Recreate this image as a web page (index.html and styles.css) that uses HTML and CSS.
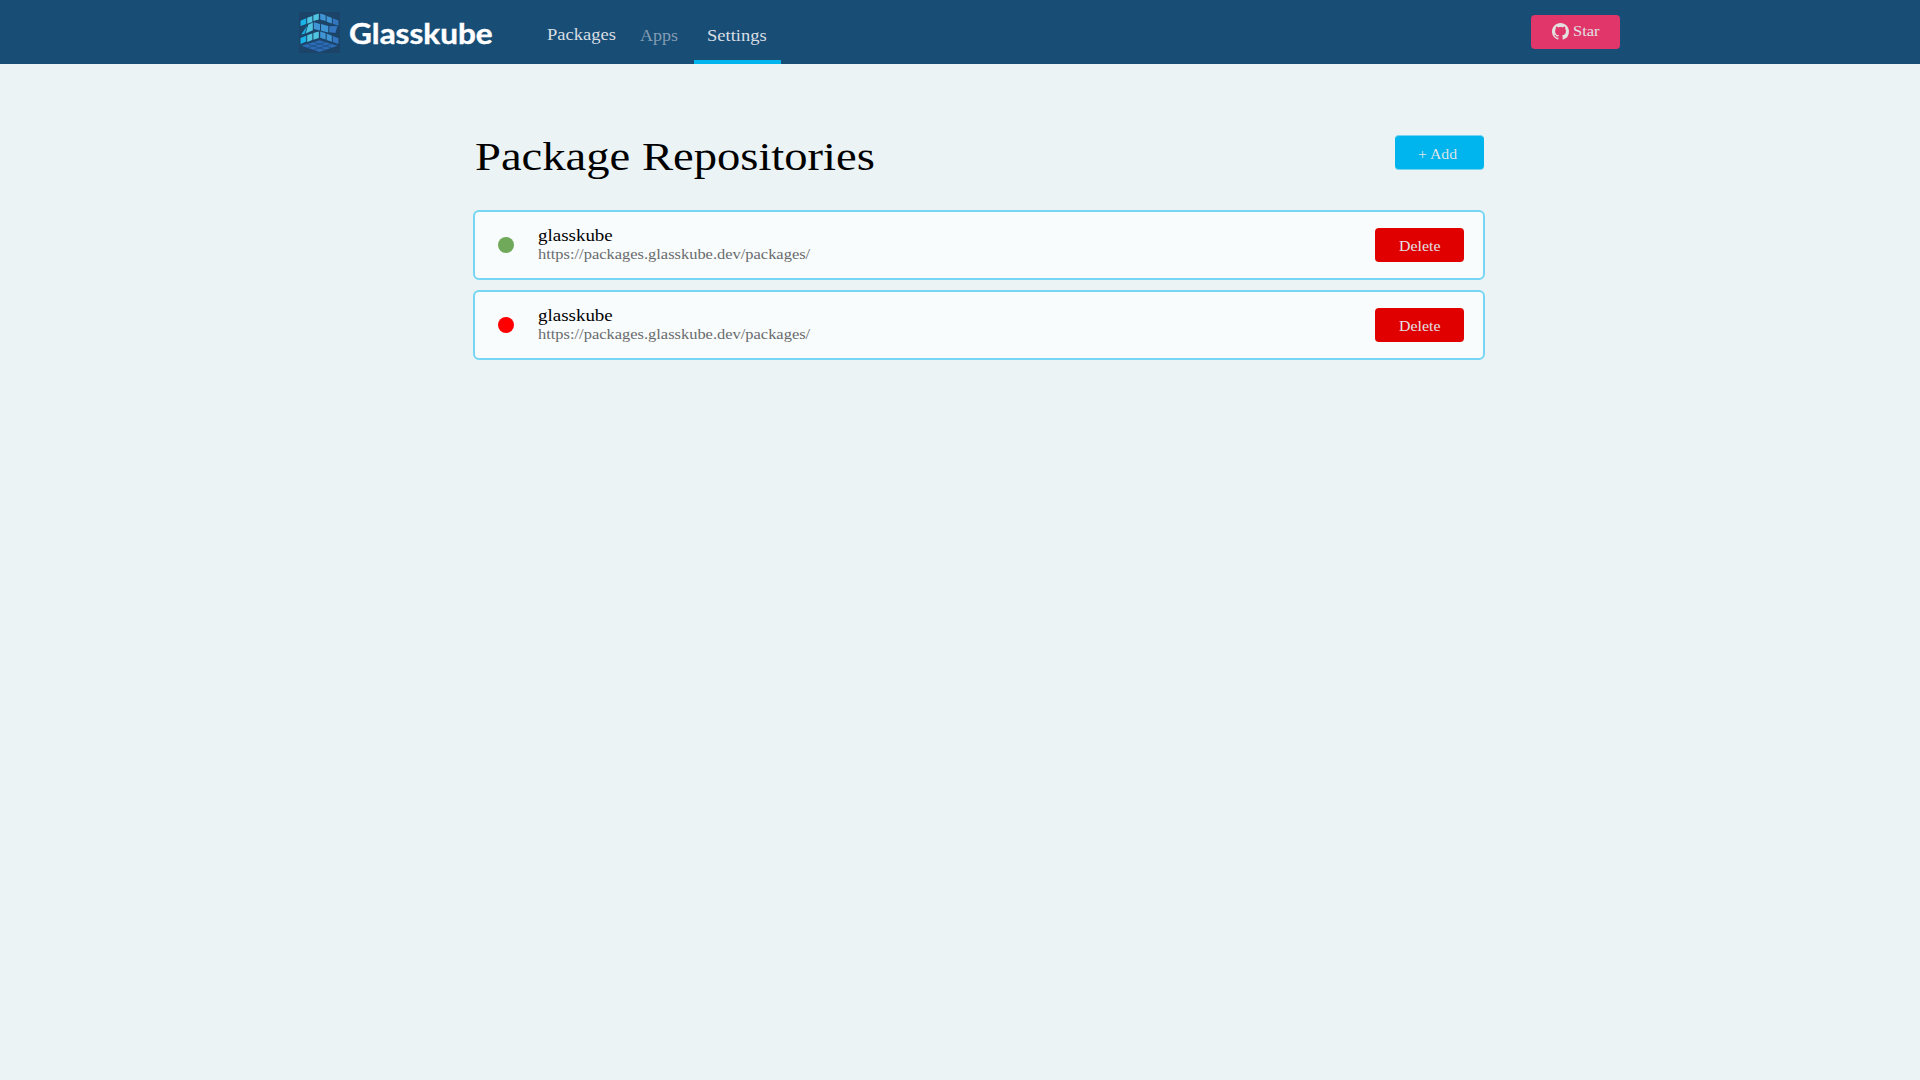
FILE: index.html
```html
<!DOCTYPE html>
<html lang="en">
<head>
<meta charset="utf-8">
<title>Glasskube</title>
<link rel="stylesheet" href="styles.css">
</head>
<body>
<header class="topbar">
  <a class="brand">
    <svg class="brand-mark" viewBox="0 0 40 40" width="41" height="41">
      <rect width="40" height="40" fill="#1b4468"/>
      <g fill="#50c4e0">
        <path d="M14 3.2l5.3-1.8v6L14 8.8z"/><path d="M8 5.6l5-1.8v6l-5 1.6z"/>
        <path d="M9 12.500l4.500-2.300v7.600l-7 3.200z"/>
        <path d="M14 20.6l5.3-1.6v6.4L14 27z"/><path d="M8 22.8l5-1.8v6.2l-5 2z"/>
      </g>
      <g fill="#1bb4ea">
        <path d="M1.5 8.6l5.5-2.4v5.4l-5.5 2z"/><path d="M8 13.500L5.500 21.300l-3.300.7z"/>
        <path d="M1.5 25.4L7 23.2v5.6l-5.5 2.4z"/>
      </g>
      <g fill="#4095d5">
        <path d="M20.7 1.4L26 3.2v5.6l-5.3-1.6z"/><path d="M27 3.8l5 1.8v5.6l-5-1.8z"/>
        <path d="M14.500 10l6 1.600v6.400l-6-1.400z"/>
        <path d="M21.500 11.800l7 1.900v6.300l-7-1.700z"/>
        <path d="M20.7 19l5.3 1.8v6l-5.3-1.6z"/><path d="M27 21.2l5 1.8v6l-5-1.8z"/>
      </g>
      <g fill="#3375bf">
        <path d="M33 6l5.5 2.4v5L33 11.4z"/><path d="M29.500 14l8-.3-2 6.8-6-.8z"/>
        <path d="M33 23.4l5.5 2.2v5.6L33 29.2z"/>
      </g>
      <path d="M20 27.5L37.5 33 20 39 2.500 33z" fill="#2d6cb5"/>
      <path d="M14.200 29.300L31.700 35M8.300 31.200L25.800 37M25.800 29.300L8.300 35M31.700 31.200L14.200 37" stroke="#1b4f86" stroke-width=".8" fill="none"/>
    </svg>
    <span class="brand-name">Glasskube</span>
  </a>
  <nav class="nav">
    <a class="nav-link packages"><span>Packages</span></a>
    <a class="nav-link apps"><span>Apps</span></a>
    <a class="nav-link settings"><span>Settings</span></a>
  </nav>
  <button class="btn star">
    <svg viewBox="0 0 16 16" width="17" height="17" fill="#e3e0e0"><path d="M8 0C3.58 0 0 3.58 0 8c0 3.54 2.29 6.53 5.47 7.59.4.07.55-.17.55-.38 0-.19-.01-.82-.01-1.49-2.01.37-2.53-.49-2.69-.94-.09-.23-.48-.94-.82-1.13-.28-.15-.68-.52-.01-.53.63-.01 1.08.58 1.23.82.72 1.21 1.87.87 2.33.66.07-.52.28-.87.51-1.07-1.78-.2-3.64-.89-3.64-3.95 0-.87.31-1.590.82-2.150-.08-.2-.36-1.020.08-2.120 0 0 .67-.21 2.200.820.640-.180 1.320-.270 2-.270s1.360.090 2 .270c1.530-1.040 2.200-.820 2.200-.820.440 1.100.160 1.920.080 2.120.510.560.820 1.270.820 2.150 0 3.070-1.870 3.750-3.650 3.950.290.250.540.730.540 1.480 0 1.070-.010 1.930-.010 2.200 0 .210.150.460.550.380A8.010 8.010 0 0 0 16 8c0-4.420-3.580-8-8-8z"/></svg>
    <span>Star</span>
  </button>
</header>
<main class="page">
  <div class="page-head">
    <h1>Package Repositories</h1>
    <button class="btn add"><span>+ Add</span></button>
  </div>
  <ul class="repos">
    <li class="repo">
      <i class="status ok"></i>
      <div class="info"><div class="name">glasskube</div><div class="url">https://packages.glasskube.dev/packages/</div></div>
      <button class="btn delete"><span>Delete</span></button>
    </li>
    <li class="repo">
      <i class="status bad"></i>
      <div class="info"><div class="name">glasskube</div><div class="url">https://packages.glasskube.dev/packages/</div></div>
      <button class="btn delete"><span>Delete</span></button>
    </li>
  </ul>
</main>
</body>
</html>
```
FILE: styles.css
```css
* { box-sizing: border-box; }
body {
  margin: 0;
  min-height: 100vh;
  background: #ebf3f5;
  font-family: "Liberation Serif", serif;
  color: #000;
}
.topbar {
  display: flex;
  height: 64px;
  padding: 0 300px 0 299px;
  background: #184d76;
}
.brand { display: flex; width: 225px; padding-top: 12px; }
.brand-mark { flex: none; }
.brand-name {
  margin: 1px 0 0 9px;
  font: 700 28px/40px Lato, sans-serif;
  color: #fff;
  -webkit-text-stroke: 0.4px #fff;
  transform: scaleX(1.125);
  transform-origin: 0 0;
}
.nav { display: flex; flex: 1; }
.nav-link {
  font-size: 17px;
  line-height: 20px;
  color: #d9dfe3;
}
.nav-link span {
  display: inline-block;
  transform: scaleX(1.09);
  transform-origin: 0 0;
}
.packages { width: 116px; padding: 25px 0 0 23px; }
.apps { width: 54px; padding: 26px 0 0; color: #839cb1; }
.nav .apps span { transform: scaleX(1.06); }
.settings {
  width: 87px;
  padding: 26px 0 0 13px;
  border-bottom: 4px solid #00b4ee;
}
.btn {
  display: flex;
  flex: none;
  width: 89px;
  height: 34px;
  padding: 0;
  border: 0;
  border-radius: 4px;
  font: 15px/18px "Liberation Serif", serif;
  color: #dfe3e6;
}
.btn span {
  transform: scaleX(1.06);
  transform-origin: 0 0;
}
.star { margin-top: 15px; padding: 8px 0 0 21px; background: #e13669; }
.star span { margin: -1px 0 0 4px; transform: scaleX(1.1); }
.page { width: 1012px; margin: 0 0 0 473px; }
.page-head {
  display: flex;
  justify-content: space-between;
  height: 146px;
  padding: 70px 1px 0 2px;
}
h1 {
  margin: 0;
  font-size: 40px;
  font-weight: 400;
  line-height: 46px;
  white-space: nowrap;
  transform: scaleX(1.165);
  transform-origin: 0 0;
}
.add {
  height: 35px;
  margin-top: 1px;
  padding: 9px 0 0 23px;
  border: solid #76d4f2;
  border-width: 1px 0;
  background: #00b4ee;
}
.add span { transform: scaleX(1.05); }
.repos {
  display: flex;
  flex-direction: column;
  gap: 10px;
  margin: 0;
  padding: 0;
  list-style: none;
}
.repo {
  display: flex;
  height: 70px;
  padding: 16px 19px 0 23px;
  border: 2px solid #76d6f4;
  border-radius: 6px;
  background: #f8fcfd;
}
.status { width: 16px; height: 16px; margin-top: 9px; border-radius: 50%; }
.ok { background: #70a959; }
.bad { background: #f00; }
.info { flex: 1; margin: -2px 0 0 24px; }
.name, .url {
  width: max-content;
  transform-origin: 0 0;
  white-space: nowrap;
}
.name { font-size: 17px; line-height: 20px; transform: scaleX(1.115); }
.url { font-size: 14.5px; line-height: 17px; color: #696b6c; transform: scaleX(1.134); }
.delete { padding: 9px 0 0 24px; background: #e10000; }
```
